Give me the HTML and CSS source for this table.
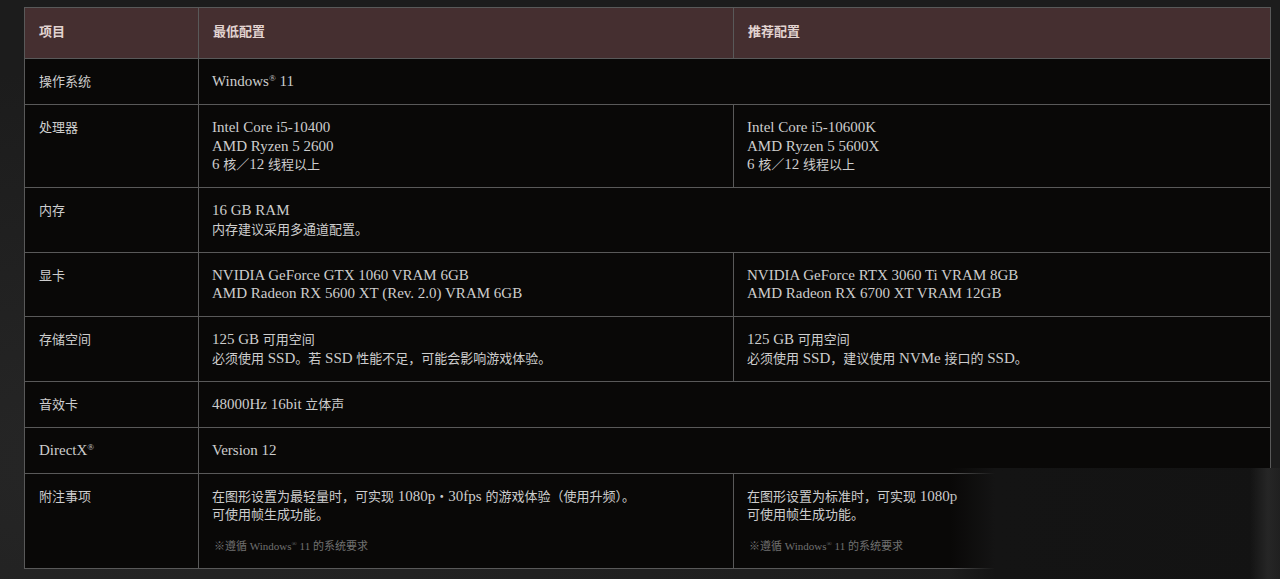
FILE: index.html
```html
<!DOCTYPE html>
<html lang="zh-CN">
<head>
<meta charset="utf-8">
<title>系统需求</title>
<link rel="stylesheet" href="styles.css">
</head>
<body>
<div class="page">
  <table class="spec">
    <colgroup>
      <col class="c1"><col class="c2"><col class="c3">
    </colgroup>
    <thead>
      <tr><th><span class="z">项目</span></th><th><span class="z">最低配置</span></th><th><span class="z">推荐配置</span></th></tr>
    </thead>
    <tbody>
      <tr><td><span class="z">操作系统</span></td><td colspan="2">Windows<sup>®</sup> 11</td></tr>
      <tr>
        <td><span class="z">处理器</span></td>
        <td>Intel Core i5-10400<br>AMD Ryzen 5 2600<br>6 <span class="z">核／</span>12 <span class="z">线程以上</span></td>
        <td>Intel Core i5-10600K<br>AMD Ryzen 5 5600X<br>6 <span class="z">核／</span>12 <span class="z">线程以上</span></td>
      </tr>
      <tr><td><span class="z">内存</span></td><td colspan="2">16 GB RAM<br><span class="z">内存建议采用多通道配置。</span></td></tr>
      <tr>
        <td><span class="z">显卡</span></td>
        <td>NVIDIA GeForce GTX 1060 VRAM 6GB<br>AMD Radeon RX 5600 XT (Rev. 2.0) VRAM 6GB</td>
        <td>NVIDIA GeForce RTX 3060 Ti VRAM 8GB<br>AMD Radeon RX 6700 XT VRAM 12GB</td>
      </tr>
      <tr>
        <td><span class="z">存储空间</span></td>
        <td>125 GB <span class="z">可用空间</span><br><span class="z">必须使用</span> SSD<span class="z">。若</span> SSD <span class="z">性能不足，可能会影响游戏体验。</span></td>
        <td>125 GB <span class="z">可用空间</span><br><span class="z">必须使用</span> SSD<span class="z">，建议使用</span> NVMe <span class="z">接口的</span> SSD<span class="z">。</span></td>
      </tr>
      <tr><td><span class="z">音效卡</span></td><td colspan="2">48000Hz 16bit <span class="z">立体声</span></td></tr>
      <tr><td>DirectX<sup>®</sup></td><td colspan="2">Version 12</td></tr>
      <tr>
        <td><span class="z">附注事项</span></td>
        <td><span class="z">在图形设置为最轻量时，可实现</span> 1080p<span class="z">・</span>30fps <span class="z">的游戏体验（使用升频）。</span><br><span class="z">可使用帧生成功能。</span><p class="note">※遵循 Windows<sup>®</sup> 11 的系统要求</p></td>
        <td><span class="z">在图形设置为标准时，可实现</span> 1080p<br><span class="z">可使用帧生成功能。</span><p class="note">※遵循 Windows<sup>®</sup> 11 的系统要求</p></td>
      </tr>
    </tbody>
  </table>
  <div class="smudge"></div>
</div>
</body>
</html>
```
FILE: styles.css
```css
html, body {
  margin: 0;
  padding: 0;
  background: #1d1d1d;
}
body {
  font-family: "Liberation Serif", "Noto Sans CJK SC", serif;
  color: #cdcdcd;
  width: 1280px;
  height: 579px;
  overflow: hidden;
  background: radial-gradient(ellipse at 10% 80%, #262626 0%, #1c1c1c 60%), #1d1d1d;
}
.page {
  position: relative;
  padding: 7px 10px 0 24px;
  height: 572px;
}
.spec {
  border-collapse: collapse;
  width: 1246px;
  table-layout: fixed;
  font-size: 15px;
  line-height: 18.5px;
}
.c1 { width: 174px; }
.c2 { width: 535px; }
.c3 { width: 537px; }
.spec th, .spec td {
  border: 1px solid #595959;
  text-align: left;
  vertical-align: top;
  padding: 13px 14px 13.5px 13px;
}
.spec th, .spec td:first-child {
  padding-left: 14px;
}
.spec th {
  background: #452f30;
  color: #e2d4d1;
  font-weight: bold;
  padding-top: 14px;
  padding-bottom: 17.5px;
}
.spec td {
  background: #090807;
}
.z {
  font-family: "Noto Sans CJK SC", sans-serif;
  font-size: 13px;
  line-height: 1;
}
sup {
  font-size: 9px;
  line-height: 0;
  vertical-align: 5px;
}
.note {
  margin: 14px 0 0 2px;
  font-size: 11px;
  line-height: 17px;
  color: #707070;
  font-family: "Liberation Serif", "Noto Sans CJK SC", serif;
}
.note sup { font-size: 7px; vertical-align: 4px; }
.smudge {
  position: absolute;
  left: 950px;
  top: 468px;
  width: 330px;
  height: 111px;
  background:
    linear-gradient(to right, rgba(36,36,36,0) 0px, rgba(36,36,36,0) 300px, #262626 318px, #202020 330px),
    linear-gradient(to right, rgba(18,18,18,0) 0px, #141414 45px, #131313 100%);
}
```
